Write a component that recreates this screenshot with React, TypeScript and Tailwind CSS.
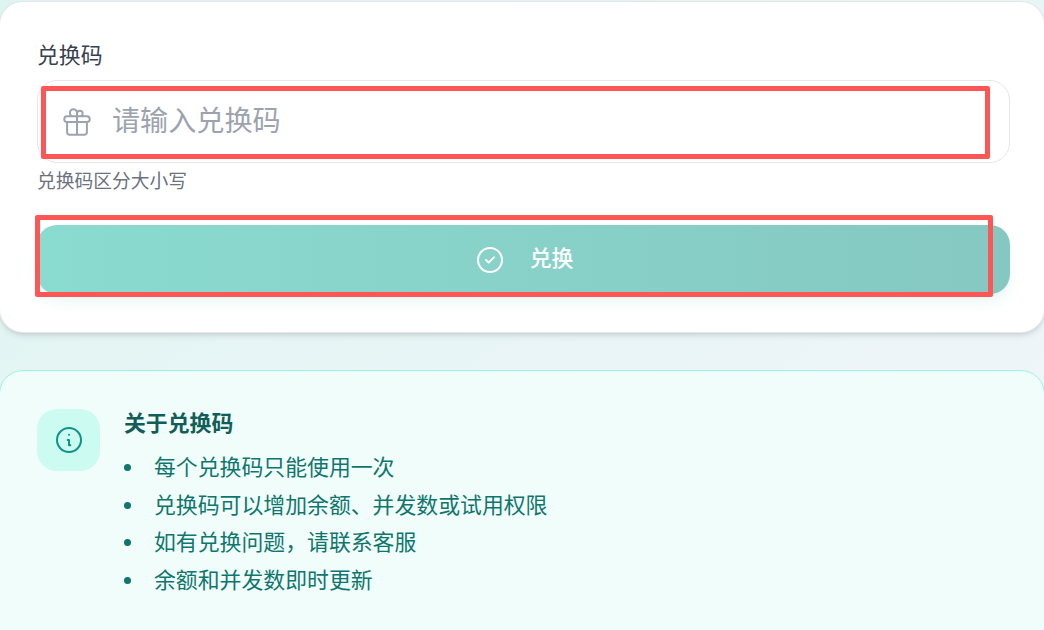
const FONT = "font-['Liberation_Sans','Noto_Sans_CJK_SC',sans-serif]";

function GiftIcon() {
    return (
        <svg width="34" height="34" viewBox="0 0 24 24" fill="none" stroke="currentColor" strokeWidth="1.4" strokeLinecap="round" strokeLinejoin="round">
            <path d="M12 8v13m0-13V6a2 2 0 112 2h-2zm0 0V5.5A2.5 2.5 0 109.5 8H12zm-7 4h14M5 12a2 2 0 110-4h14a2 2 0 110 4M5 12v7a2 2 0 002 2h10a2 2 0 002-2v-7" />
        </svg>
    );
}

function CheckCircleIcon() {
    return (
        <svg width="32" height="32" viewBox="0 0 24 24" fill="none" stroke="currentColor" strokeWidth="1.5" strokeLinecap="round" strokeLinejoin="round">
            <path d="M9 12l2 2 4-4m6 2a9 9 0 11-18 0 9 9 0 0118 0z" />
        </svg>
    );
}

function InfoIcon() {
    return (
        <svg width="32" height="32" viewBox="0 0 24 24" fill="none" stroke="currentColor" strokeWidth="1.5" strokeLinecap="round" strokeLinejoin="round">
            <path d="M13 16h-1v-4h-1m1-4h.01M21 12a9 9 0 11-18 0 9 9 0 0118 0z" />
        </svg>
    );
}

const tips = [
    '每个兑换码只能使用一次',
    '兑换码可以增加余额、并发数或试用权限',
    '如有兑换问题，请联系客服',
    '余额和并发数即时更新',
];

export default function App() {
    return (
        <div className={`relative h-[630px] w-[1044px] overflow-hidden bg-gradient-to-br from-[#ddf5f1] to-[#f3f5fa] pt-px ${FONT}`}>
            <div className="-mx-px h-[332px] rounded-[24px] border border-[#e5e7eb] bg-white pl-[37px] pr-[34px] pt-[38px] shadow-md">
                <label className="block text-[21.875px] leading-[32px] text-[#374151]">兑换码</label>
                <div className="mt-[8px] flex h-[83px] items-center rounded-[20px] border border-[#e5e7eb] bg-white pl-[22px]">
                    <span className="text-[#9ca3af]">
                        <GiftIcon />
                    </span>
                    <span className="ml-[18px] mt-[2px] text-[28.125px] text-[#9ca3af]">请输入兑换码</span>
                </div>
                <p className="mt-[5px] text-[18.75px] leading-[28px] text-[#6b7280]">兑换码区分大小写</p>
                <button className="mt-[29px] flex h-[69px] w-full items-center justify-center gap-[24px] rounded-[20px] bg-gradient-to-r from-[#8adbd0] to-[#85c8c1] text-[21.875px] font-medium text-white shadow-lg shadow-[#14b8a6]/10">
                    <CheckCircleIcon />
                    <span>兑换</span>
                </button>
            </div>

            <div className="-mx-px mt-[37px] flex h-[300px] gap-[24px] rounded-[24px] border border-[#99f6e4] bg-[#f0fdfa] px-[37px] pt-[38px]">
                <div className="flex h-[62px] w-[63px] flex-shrink-0 items-center justify-center rounded-[20px] bg-[#ccfbf1] text-[#0d9488]">
                    <InfoIcon />
                </div>
                <div>
                    <h3 className="text-[21.875px] leading-[30px] font-bold text-[#115e59]">关于兑换码</h3>
                    <ul className="mt-[10px] text-[21.875px] leading-[37.5px] text-[#0f766e]">
                        {tips.map((tip) => (
                            <li key={tip} className="flex items-center gap-[23px]">
                                <span className="h-[7px] w-[7px] flex-shrink-0 rounded-full bg-[#0f766e]" />
                                {tip}
                            </li>
                        ))}
                    </ul>
                </div>
            </div>

            {/* red annotation boxes drawn over the screenshot */}
            <div className="absolute left-[41px] top-[86px] h-[73px] w-[949px] rounded-[2px] border-[5px] border-[#fe5555]" />
            <div className="absolute left-[35px] top-[215px] h-[82px] w-[958px] rounded-[2px] border-[5px] border-[#fe5555]" />
        </div>
    );
}
